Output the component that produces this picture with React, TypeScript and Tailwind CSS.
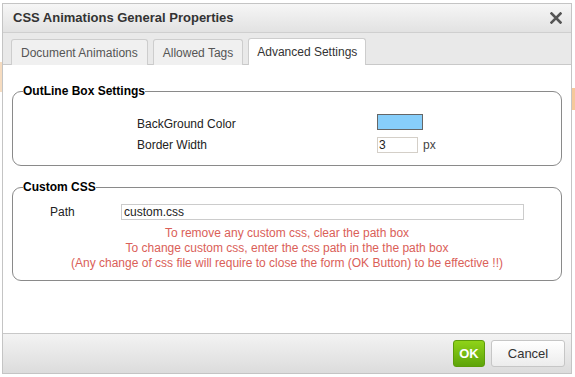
import React from "react";

const font = { fontFamily: '"Liberation Sans", Arial, sans-serif' };

export default function App() {
  return (
    <div className="w-[575px] h-[377px] bg-white overflow-hidden relative" style={font}>
      <div className="absolute left-0 top-[62px] w-[2px] h-[30px] bg-[#f6dcc0]" />
      <div className="absolute right-0 top-[88px] w-[3px] h-[22px] bg-[#f6c89a]" />
      <div className="ml-[2px] mt-[3px] w-[570px] h-[371px] border border-[#c4c4c4] flex flex-col bg-white">
        {/* Title bar */}
        <div className="h-[29px] flex items-center justify-between pl-[10px] pr-[9px] bg-gradient-to-b from-[#f6f6f6] to-[#e2e2e2] border-b border-[#cfcfcf]">
          <span className="text-[13px] font-bold text-[#333]">CSS Animations General Properties</span>
          <svg width="12" height="12" viewBox="0 0 12 12">
            <path d="M1.5 1.5 L10.5 10.5 M10.5 1.5 L1.5 10.5" stroke="#555" strokeWidth="2.6" strokeLinecap="square" />
          </svg>
        </div>
        {/* Tabs */}
        <div className="h-[32px] bg-[#e9e9e9] border-b border-[#c9c9c9] flex items-end pl-[8px] gap-[5px]">
          <div className="h-[26px] px-[9px] flex items-center border border-b-0 border-[#cdcdcd] rounded-t-[3px] bg-[#f0f0f0] text-[12px] text-[#555] -mb-px">
            Document Animations
          </div>
          <div className="h-[26px] px-[9px] flex items-center border border-b-0 border-[#cdcdcd] rounded-t-[3px] bg-[#f0f0f0] text-[12px] text-[#555] -mb-px">
            Allowed Tags
          </div>
          <div className="h-[27px] px-[8px] flex items-center border border-b-0 border-[#cdcdcd] rounded-t-[3px] bg-white text-[12px] text-[#333] -mb-px">
            Advanced Settings
          </div>
        </div>
        {/* Content */}
        <div className="flex-1 px-[9px] pt-[19px]">
          <fieldset className="border border-[#8a8a8a] rounded-[9px] px-[12px] pb-[12px] pt-[18px]">
            <legend className="text-[12px] font-bold text-black px-0 ml-[-2px] leading-[14px]">OutLine Box Settings</legend>
            <div className="flex flex-col gap-[7px] pl-[112px] mt-[-2px]">
              <div className="flex items-center h-[16px]">
                <span className="w-[240px] text-[12px] text-[#222] pt-[3px]">BackGround Color</span>
                <div className="w-[46px] h-[16px] bg-[#87cefa] border border-[#666]" />
              </div>
              <div className="flex items-center h-[16px]">
                <span className="w-[240px] text-[12px] text-[#222]">Border Width</span>
                <div className="w-[41px] h-[16px] border border-[#d4cfc8] text-[12px] leading-[14px] pl-[1px] text-[#222]">3</div>
                <span className="ml-[5px] text-[12px] text-[#444]">px</span>
              </div>
            </div>
          </fieldset>
          <fieldset className="mt-[14px] border border-[#8a8a8a] rounded-[9px] px-[12px] pb-[9px] pt-[11px]">
            <legend className="text-[12px] font-bold text-black px-0 ml-[-2px] leading-[14px]">Custom CSS</legend>
            <div className="flex items-center h-[16px] mt-[-1px]">
              <span className="w-[96px] pl-[25px] text-[12px] text-[#222]">Path</span>
              <div className="w-[403px] h-[16px] border border-[#cccccc] text-[12px] leading-[14px] pl-[2px] text-[#222]">custom.css</div>
            </div>
            <div className="mt-[6px] text-center text-[12px] leading-[15px] text-[#da6058]">
              <div>To remove any custom css, clear the path box</div>
              <div>To change custom css, enter the css path in the the path box</div>
              <div>(Any change of css file will require to close the form (OK Button) to be effective !!)</div>
            </div>
          </fieldset>
        </div>
        {/* Footer */}
        <div className="h-[40px] border-t border-[#c8c8c8] bg-gradient-to-b from-[#f3f3f3] to-[#dcdcdc] flex items-center justify-end gap-[6px] pr-[6px]">
          <button className="h-[27px] w-[32px] rounded-[3px] border border-[#5d9b0a] bg-gradient-to-b from-[#8fd318] to-[#5ea40a] text-white text-[13px] font-bold">
            OK
          </button>
          <button className="h-[27px] w-[74px] rounded-[3px] border border-[#c6c6c6] bg-gradient-to-b from-[#ffffff] to-[#ececec] text-[#333] text-[13px]">
            Cancel
          </button>
        </div>
      </div>
    </div>
  );
}
